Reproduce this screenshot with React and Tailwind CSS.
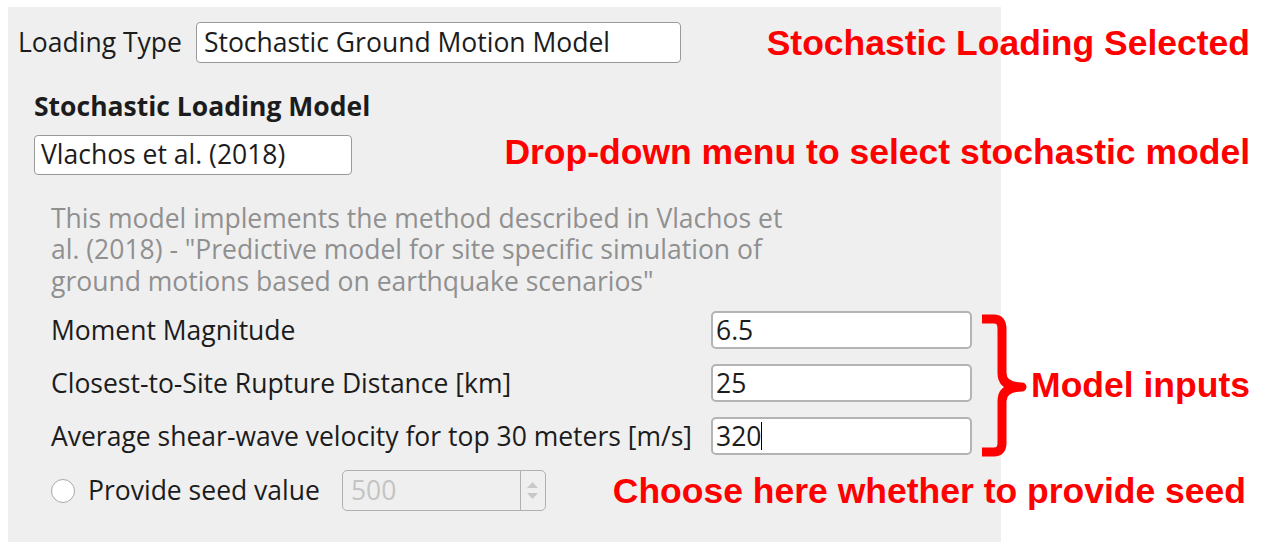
import React from 'react';

const ui = { fontFamily: '"Open Sans", "Noto Sans", sans-serif' };
const note = { fontFamily: '"Liberation Sans", Arial, sans-serif' };

function Field({ value, caret }) {
  return (
    <div className="w-[261px] h-[38px] bg-white border-2 border-[#b4b4b4] rounded-[5px] flex items-center pl-[3px] text-[26.5px] leading-none text-[#1c1c1c]">
      <span>{value}</span>
      {caret && <span className="w-px h-[28px] bg-black"></span>}
    </div>
  );
}

export default function App() {
  const inputs = [
    { label: 'Moment Magnitude', value: '6.5' },
    { label: 'Closest-to-Site Rupture Distance [km]', value: '25' },
    { label: 'Average shear-wave velocity for top 30 meters [m/s]', value: '320', caret: true },
  ];

  return (
    <div className="relative w-[1261px] h-[553px] bg-white overflow-hidden" style={ui}>
      <div className="pt-[7px] pl-[8px]">
        <div className="w-[993px] h-[535px] bg-[#efefef] text-[#1c1c1c]">
          {/* Loading type row */}
          <div className="flex items-center pt-[15px] pl-[10px] gap-[14px]">
            <span className="text-[26.5px] leading-none">Loading Type</span>
            <div className="w-[485px] h-[41px] bg-white border border-[#9a9a9a] rounded-[4px] flex items-center pl-[7px] text-[26.5px] leading-none">
              Stochastic Ground Motion Model
            </div>
          </div>

          <div className="pl-[26px] pt-[30px]">
            <div className="text-[26.5px] font-bold leading-none">Stochastic Loading Model</div>
            <div className="mt-[15px] w-[318px] h-[40px] bg-white border border-[#9a9a9a] rounded-[4px] flex items-center pl-[6px] text-[26.5px] leading-none">
              Vlachos et al. (2018)
            </div>
          </div>

          <div className="pl-[43px] pr-[29px]">
            <p className="mt-[28px] text-[26.5px] leading-[31.5px] text-[#909090]">
              This model implements the method described in Vlachos et<br />
              al. (2018) - "Predictive model for site specific simulation of<br />
              ground motions based on earthquake scenarios"
            </p>

            <div className="mt-[14px] flex flex-col gap-[15px]">
              {inputs.map((row) => (
                <div key={row.label} className="flex items-center justify-between">
                  <span className="text-[26.5px] leading-none">{row.label}</span>
                  <Field value={row.value} caret={row.caret} />
                </div>
              ))}
            </div>

            <div className="mt-[15px] flex items-center">
              <span className="w-[24px] h-[24px] rounded-full bg-white border border-[#a8a8a8]"></span>
              <span className="ml-[13px] text-[26.5px] leading-none">Provide seed value</span>
              <div className="ml-[22px] w-[204px] h-[41px] border border-[#b0b0b0] rounded-[5px] flex bg-[#efefef]">
                <div className="flex-1 flex items-center pl-[8px] text-[26.5px] leading-none text-[#c4c4c4]">500</div>
                <div className="w-[25px] border-l border-[#b0b0b0] flex flex-col items-center justify-center gap-[5px]">
                  <svg width="11" height="6" viewBox="0 0 11 6"><path d="M0 6 L5.5 0 L11 6 Z" fill="#c8c8c8" /></svg>
                  <svg width="11" height="6" viewBox="0 0 11 6"><path d="M0 0 L5.5 6 L11 0 Z" fill="#c8c8c8" /></svg>
                </div>
              </div>
            </div>
          </div>
        </div>
      </div>

      {/* Annotations */}
      <div className="absolute right-[11px] top-[26px] text-[35.5px] font-bold text-[#ff0000] leading-none" style={note}>
        Stochastic Loading Selected
      </div>
      <div className="absolute right-[11px] top-[135px] text-[35.5px] font-bold text-[#ff0000] leading-none" style={note}>
        Drop-down menu to select stochastic model
      </div>
      <svg className="absolute left-[976px] top-[311px]" width="52" height="148" viewBox="0 0 52 148">
        <path
          d="M6 8 L18 8 Q26 8 26 18 L26 62 Q26 76 46 76 Q26 76 26 90 L26 132 Q26 141 18 141 L6 141"
          fill="none"
          stroke="#ff0000"
          strokeWidth="9"
          strokeLinejoin="round"
        />
      </svg>
      <div className="absolute right-[11px] top-[368px] text-[35.5px] font-bold text-[#ff0000] leading-none" style={note}>
        Model inputs
      </div>
      <div className="absolute right-[15px] top-[474px] text-[35.5px] font-bold text-[#ff0000] leading-none" style={note}>
        Choose here whether to provide seed
      </div>
    </div>
  );
}
